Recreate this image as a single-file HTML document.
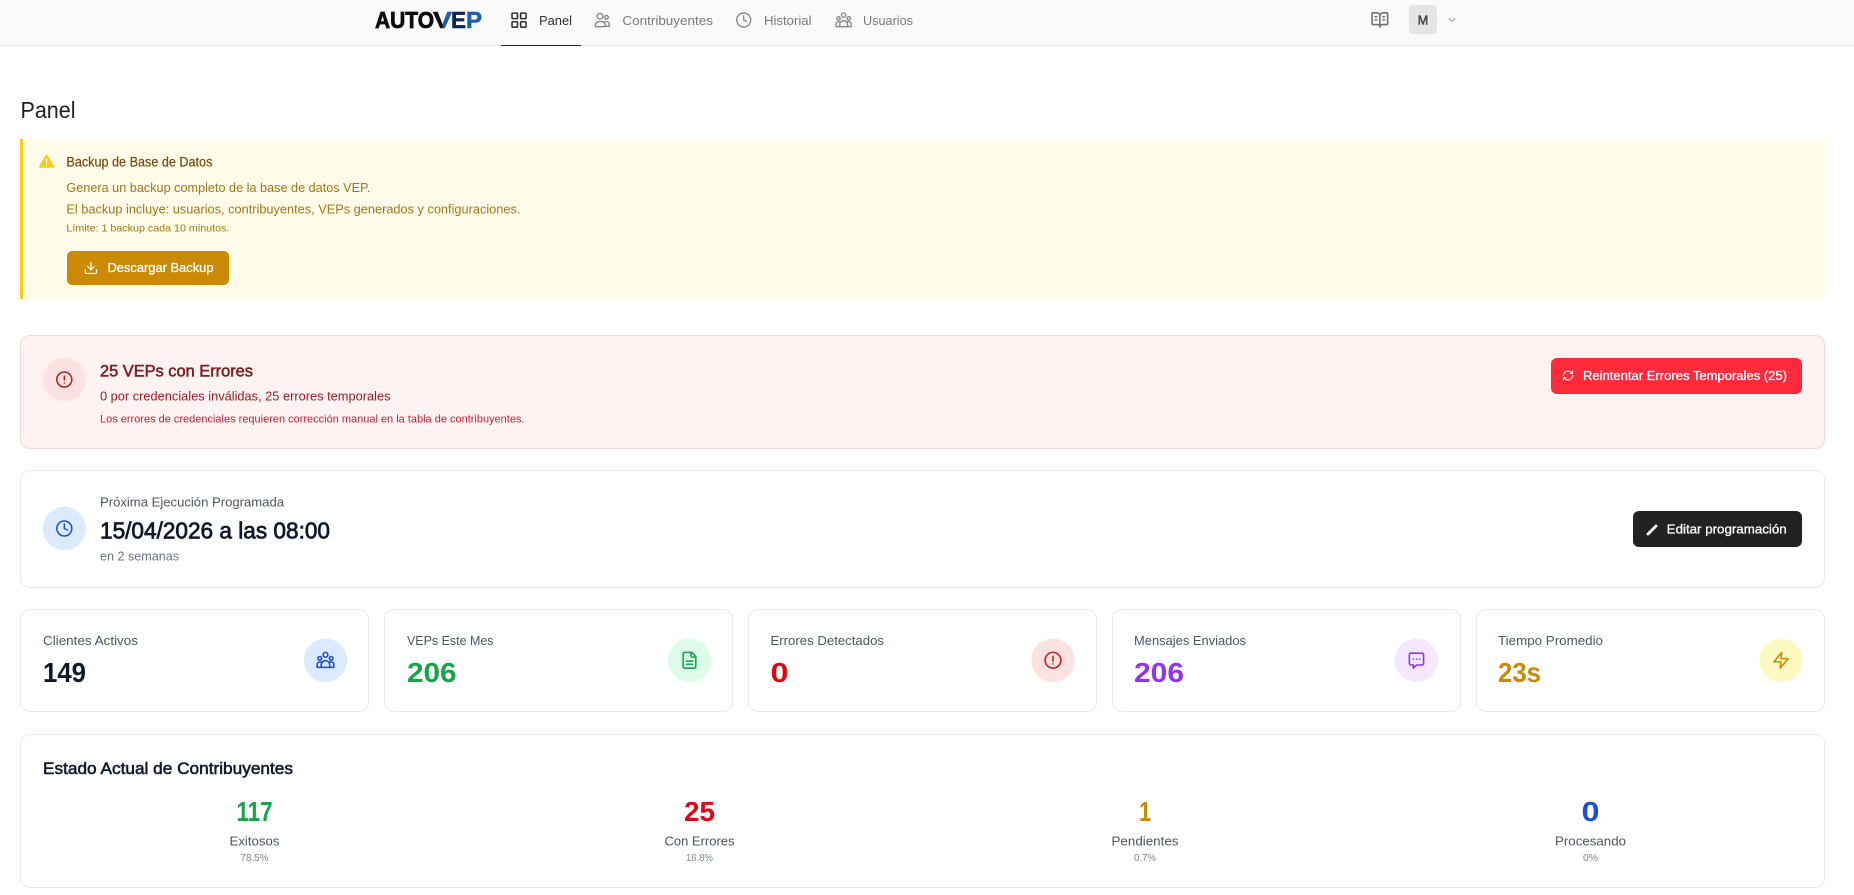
<!DOCTYPE html>
<html lang="es">
<head>
<meta charset="utf-8">
<title>Panel</title>
<style>
*{box-sizing:border-box}
html,body{margin:0;padding:0;width:1854px;height:895px;overflow:hidden;background:#fff}
.b{position:absolute}
header.b{left:0;top:0;width:1854px;height:46px;background:#fafafa;border-bottom:1px solid #e4e4e4}
.u{left:501px;top:44.500px;width:80px;height:1px;background:#262626}
.av{left:1409px;top:5px;width:28px;height:29px;background:#e5e5e5;border-radius:4px}
.y{left:20px;top:139px;width:1805px;height:160px;background:#fefce8;border-left:3px solid #facc15}
.ybtn{left:67px;top:251px;width:162px;height:34px;background:#ca8a04;border-radius:5px}
.r{left:20px;top:335px;width:1805px;height:114px;background:#fef2f2;border:1px solid #f7d6d9;border-radius:10px}
.c{background:#fff;border:1px solid #e9e9e9;border-radius:10px}
.s{top:609px;width:349px;height:103px}
.rbtn{left:1551px;top:358px;width:251px;height:36px;background:#ff2a3a;border-radius:6px}
.kbtn{left:1633px;top:511px;width:169px;height:36px;background:#222;border-radius:6px}
svg{position:absolute;left:0;top:0}
text{font-family:"Liberation Sans",sans-serif;white-space:pre}
.m{stroke:currentColor;stroke-width:.2}
.sb{stroke:currentColor;stroke-width:.55}
.i{fill:none;stroke:currentColor;stroke-width:2;stroke-linecap:round;stroke-linejoin:round}
</style>
</head>
<body>
<header class="b"></header>
<div class="b u"></div>
<div class="b av"></div>
<div class="b y"></div>
<div class="b ybtn"></div>
<div class="b r"></div>
<div class="b rbtn"></div>
<div class="b c" style="left:20px;top:470px;width:1805px;height:118px"></div>
<div class="b kbtn"></div>
<div class="b c s" style="left:20px"></div>
<div class="b c s" style="left:384px"></div>
<div class="b c s" style="left:748px"></div>
<div class="b c s" style="left:1112px"></div>
<div class="b c s" style="left:1476px"></div>
<div class="b c" style="left:20px;top:734px;width:1805px;height:154px"></div>

<svg width="1854" height="895" viewBox="0 0 1854 895" xmlns="http://www.w3.org/2000/svg">
<defs>
<linearGradient id="vg" x1="0" y1="0" x2="1" y2="0"><stop offset="0.45" stop-color="#111"/><stop offset="0.55" stop-color="#1d5fb0"/></linearGradient>
</defs>

<!-- Logo -->
<g font-size="23.500" font-weight="700">
<text x="375" y="28" fill="#0c0c0c" textLength="59" lengthAdjust="spacingAndGlyphs" stroke="#0c0c0c" stroke-width=".8">AUTO</text>
<text x="433" y="28" fill="url(#vg)" stroke="url(#vg)" stroke-width=".5" textLength="19" lengthAdjust="spacingAndGlyphs">V</text>
<text x="451" y="28" fill="#10264f" stroke="#10264f" stroke-width=".6" textLength="15" lengthAdjust="spacingAndGlyphs">E</text>
<text x="466" y="28" fill="#1d5fb0" stroke="#1d5fb0" stroke-width=".6" textLength="16" lengthAdjust="spacingAndGlyphs">P</text>
</g>

<!-- Nav -->
<g font-size="13" fill="#7a7a7a">
<text x="539" y="25" fill="#303030" textLength="33" lengthAdjust="spacingAndGlyphs">Panel</text>
<text x="622.400" y="25" textLength="90.600" lengthAdjust="spacingAndGlyphs">Contribuyentes</text>
<text x="764" y="25" textLength="47.500" lengthAdjust="spacingAndGlyphs">Historial</text>
<text x="863" y="25" textLength="50" lengthAdjust="spacingAndGlyphs">Usuarios</text>
</g>
<g class="i" color="#303030" transform="translate(509.700 10.800) scale(.78)" stroke-width="1.700">
<rect x="3" y="3" width="7" height="7" rx="1"/><rect x="14" y="3" width="7" height="7" rx="1"/><rect x="14" y="14" width="7" height="7" rx="1"/><rect x="3" y="14" width="7" height="7" rx="1"/>
</g>
<g class="i" color="#8c8c8c" transform="translate(593.500 11.500) scale(.72)" stroke-width="1.400">
<circle cx="9" cy="6.500" r="4"/><circle cx="18" cy="8" r="2.600"/>
<path d="M2.500 21v-1.500a5.500 5.500 0 0 1 5.500-5.500h3a5.500 5.500 0 0 1 5.500 5.500V21z"/><path d="M16 14h2a4 4 0 0 1 4 4v2.500h-5"/>
</g>
<g class="i" color="#8c8c8c" transform="translate(735.300 11.600) scale(.7)" stroke-width="1.500">
<circle cx="12" cy="12" r="10"/><path d="M12 6v6l4 2"/>
</g>
<g class="i" color="#8c8c8c" transform="translate(835 11.500) scale(.72)" stroke-width="1.400">
<circle cx="12" cy="5" r="3"/><circle cx="4.800" cy="9.500" r="2.300"/><circle cx="19.200" cy="9.500" r="2.300"/>
<path d="M6.500 21v-3a5.500 5.500 0 0 1 11 0v3z"/><path d="M6.500 14H5a3.500 3.500 0 0 0-3.500 3.500V21h5"/><path d="M17.500 14H19a3.500 3.500 0 0 1 3.500 3.500V21h-5"/>
</g>
<g class="i" color="#707070" transform="translate(1370.500 10.500) scale(.78)" stroke-width="1.500">
<path d="M12 7v14"/><path d="M16 12h2"/><path d="M16 8h2"/><path d="M3 18a1 1 0 0 1-1-1V4a1 1 0 0 1 1-1h5a4 4 0 0 1 4 4 4 4 0 0 1 4-4h5a1 1 0 0 1 1 1v13a1 1 0 0 1-1 1h-6a3 3 0 0 0-3 3 3 3 0 0 0-3-3z"/><path d="M6 12h2"/><path d="M6 8h2"/>
</g>
<text x="1423" y="24.500" font-size="12.500" fill="#4a4a4a" text-anchor="middle" class="sb" color="#4a4a4a">M</text>
<g class="i" color="#a3a3a3" transform="translate(1446 14) scale(.5)" stroke-width="2.400"><path d="m6 9 6 6 6-6"/></g>

<!-- Title -->
<text x="20.500" y="118" font-size="23" fill="#1f1f1f" textLength="55" lengthAdjust="spacingAndGlyphs">Panel</text>

<!-- Backup -->
<path d="M46.600 155 L53.500 167 H39.700 Z" fill="#facc15" stroke="#facc15" stroke-width="1.500" stroke-linejoin="round"/>
<path d="M46.600 159v3.800" stroke="#fefce8" stroke-width="1.300" stroke-linecap="round"/><circle cx="46.600" cy="165.200" r=".7" fill="#fefce8"/>
<text x="66.400" y="166.500" font-size="13.500" fill="#744a12" class="m" color="#744a12" textLength="146" lengthAdjust="spacingAndGlyphs">Backup de Base de Datos</text>
<text x="66.400" y="192" font-size="13" fill="#a2751a" textLength="304" lengthAdjust="spacingAndGlyphs">Genera un backup completo de la base de datos VEP.</text>
<text x="66.400" y="213.500" font-size="13" fill="#a2751a" textLength="454" lengthAdjust="spacingAndGlyphs">El backup incluye: usuarios, contribuyentes, VEPs generados y configuraciones.</text>
<text x="66.400" y="231.500" font-size="10.500" fill="#a2751a" textLength="163" lengthAdjust="spacingAndGlyphs">Límite: 1 backup cada 10 minutos.</text>
<g class="i" color="#fff" transform="translate(83.500 260.500) scale(.62)" stroke-width="2.200"><path d="M21 15v4a2 2 0 0 1-2 2H5a2 2 0 0 1-2-2v-4"/><path d="m7 10 5 5 5-5"/><path d="M12 15V3"/></g>
<text x="107.500" y="272" font-size="13" fill="#fff" class="sb" color="#fff" style="stroke-width:.3" textLength="106" lengthAdjust="spacingAndGlyphs">Descargar Backup</text>

<!-- Errors -->
<circle cx="64.300" cy="379.500" r="21.700" fill="#fee2e2"/>
<g class="i" color="#b91c1c" transform="translate(55.300 370.500) scale(.75)"><circle cx="12" cy="12" r="10"/><path d="M12 7.500v5"/><path d="M12 16.500h.01"/></g>
<text x="100" y="376.500" font-size="16.500" fill="#7f1d1d" class="sb" color="#7f1d1d" textLength="153" lengthAdjust="spacingAndGlyphs">25 VEPs con Errores</text>
<text x="100" y="400.500" font-size="13" fill="#991b1b" textLength="290.500" lengthAdjust="spacingAndGlyphs">0 por credenciales inválidas, 25 errores temporales</text>
<text x="100" y="422.500" font-size="11" fill="#c81e3a" textLength="424.500" lengthAdjust="spacingAndGlyphs">Los errores de credenciales requieren corrección manual en la tabla de contribuyentes.</text>
<g class="i" color="#fff" transform="translate(1562 369.500) scale(.5)" stroke-width="3"><path d="M3 12a9 9 0 0 1 9-9 9.750 9.750 0 0 1 6.740 2.740L21 8"/><path d="M21 3v5h-5"/><path d="M21 12a9 9 0 0 1-9 9 9.750 9.750 0 0 1-6.740-2.740L3 16"/><path d="M8 16H3v5"/></g>
<text x="1583" y="380" font-size="13" fill="#fff" class="sb" color="#fff" style="stroke-width:.3" textLength="204" lengthAdjust="spacingAndGlyphs">Reintentar Errores Temporales (25)</text>

<!-- Next run -->
<circle cx="64.300" cy="528.500" r="21.700" fill="#dbeafe"/>
<g class="i" color="#1d4ed8" transform="translate(55.300 519.500) scale(.75)"><circle cx="12" cy="12" r="10"/><path d="M12 6v6l4 2"/></g>
<text x="100" y="506.500" font-size="13" fill="#4b5563" textLength="184" lengthAdjust="spacingAndGlyphs">Próxima Ejecución Programada</text>
<text x="100" y="538.500" font-size="23.500" fill="#0f172a" class="sb" color="#0f172a" style="stroke-width:.75" textLength="230" lengthAdjust="spacingAndGlyphs">15/04/2026 a las 08:00</text>
<text x="100" y="560.500" font-size="12.500" fill="#6b7280" textLength="79" lengthAdjust="spacingAndGlyphs">en 2 semanas</text>
<path d="M1648 534 L1656 526" stroke="#fff" stroke-width="2.800" stroke-linecap="round"/>
<text x="1666.700" y="533.500" font-size="13" fill="#fff" class="sb" color="#fff" style="stroke-width:.3" textLength="120" lengthAdjust="spacingAndGlyphs">Editar programación</text>

<!-- Stats -->
<g font-size="13" fill="#4b5563">
<text x="43" y="645" textLength="95" lengthAdjust="spacingAndGlyphs">Clientes Activos</text>
<text x="407" y="645" textLength="86.500" lengthAdjust="spacingAndGlyphs">VEPs Este Mes</text>
<text x="770.500" y="645" textLength="113.500" lengthAdjust="spacingAndGlyphs">Errores Detectados</text>
<text x="1134" y="645" textLength="112" lengthAdjust="spacingAndGlyphs">Mensajes Enviados</text>
<text x="1498" y="645" textLength="105" lengthAdjust="spacingAndGlyphs">Tiempo Promedio</text>
</g>
<g font-size="28" font-weight="700">
<text x="43" y="682" fill="#0f172a" textLength="43" lengthAdjust="spacingAndGlyphs">149</text>
<text x="407" y="682" fill="#16a34a" textLength="49.500" lengthAdjust="spacingAndGlyphs">206</text>
<text x="770.500" y="682" fill="#dc0a14" textLength="18" lengthAdjust="spacingAndGlyphs">0</text>
<text x="1134" y="682" fill="#9333ea" textLength="50" lengthAdjust="spacingAndGlyphs">206</text>
<text x="1498" y="682" fill="#ca8a04" textLength="43" lengthAdjust="spacingAndGlyphs">23s</text>
</g>
<circle cx="325.500" cy="660.300" r="21.700" fill="#dbeafe"/>
<g class="i" color="#1d4ed8" transform="translate(316 650.800) scale(.79)" stroke-width="2">
<circle cx="12" cy="5" r="3"/><circle cx="4.800" cy="9.500" r="2.300"/><circle cx="19.200" cy="9.500" r="2.300"/>
<path d="M6.500 21v-3a5.500 5.500 0 0 1 11 0v3z"/><path d="M6.500 14H5a3.500 3.500 0 0 0-3.500 3.500V21h5"/><path d="M17.500 14H19a3.500 3.500 0 0 1 3.500 3.500V21h-5"/>
</g>
<circle cx="689.500" cy="660.300" r="21.700" fill="#dcfce7"/>
<g class="i" color="#16a34a" transform="translate(680 650.800) scale(.79)">
<path d="M15 2H6a2 2 0 0 0-2 2v16a2 2 0 0 0 2 2h12a2 2 0 0 0 2-2V7Z"/><path d="M14 2v4a2 2 0 0 0 2 2h4"/><path d="M16 13H8"/><path d="M16 17H8"/>
</g>
<circle cx="1053" cy="660.300" r="21.700" fill="#fee2e2"/>
<g class="i" color="#c81e1e" transform="translate(1043.500 650.800) scale(.79)"><circle cx="12" cy="12" r="10"/><path d="M12 7v6"/><path d="M12 16.500h.01"/></g>
<circle cx="1416.500" cy="660.300" r="21.700" fill="#f3e8ff"/>
<g class="i" color="#9333ea" transform="translate(1407 650.800) scale(.79)">
<path d="M3 5a2 2 0 0 1 2-2h14a2 2 0 0 1 2 2v11a2 2 0 0 1-2 2h-7l-4 4v-4H5a2 2 0 0 1-2-2z"/><path d="M8 10.500h.01"/><path d="M12 10.500h.01"/><path d="M16 10.500h.01"/>
</g>
<circle cx="1781" cy="660.300" r="21.700" fill="#fef9c3"/>
<g class="i" color="#ca8a04" transform="translate(1771.500 650.800) scale(.79)"><path d="M13 2 3 14h9l-1 8 10-12h-9l1-8z"/></g>

<!-- Estado -->
<text x="43" y="774" font-size="17" fill="#0f172a" class="sb" color="#0f172a" textLength="250" lengthAdjust="spacingAndGlyphs">Estado Actual de Contribuyentes</text>
<g font-size="28" text-anchor="middle" font-weight="700">
<text x="254.500" y="821" fill="#16a34a" textLength="36" lengthAdjust="spacingAndGlyphs">117</text>
<text x="699.500" y="821" fill="#dc0a14" textLength="31" lengthAdjust="spacingAndGlyphs">25</text>
<text x="1145" y="821" fill="#ca8a04" textLength="12" lengthAdjust="spacingAndGlyphs">1</text>
<text x="1590.500" y="821" fill="#1d4ed8" textLength="18" lengthAdjust="spacingAndGlyphs">0</text>
</g>
<g font-size="13" text-anchor="middle" fill="#4b5563">
<text x="254.500" y="845.500" textLength="50" lengthAdjust="spacingAndGlyphs">Exitosos</text>
<text x="699.500" y="845.500" textLength="70" lengthAdjust="spacingAndGlyphs">Con Errores</text>
<text x="1145" y="845.500" textLength="67" lengthAdjust="spacingAndGlyphs">Pendientes</text>
<text x="1590.500" y="845.500" textLength="71" lengthAdjust="spacingAndGlyphs">Procesando</text>
</g>
<g font-size="10.500" text-anchor="middle" fill="#7b8490">
<text x="254.500" y="861" textLength="28" lengthAdjust="spacingAndGlyphs">78.5%</text>
<text x="699.500" y="861" textLength="27" lengthAdjust="spacingAndGlyphs">16.8%</text>
<text x="1145" y="861" textLength="22" lengthAdjust="spacingAndGlyphs">0.7%</text>
<text x="1590.500" y="861" textLength="15" lengthAdjust="spacingAndGlyphs">0%</text>
</g>
</svg>
</body>
</html>
